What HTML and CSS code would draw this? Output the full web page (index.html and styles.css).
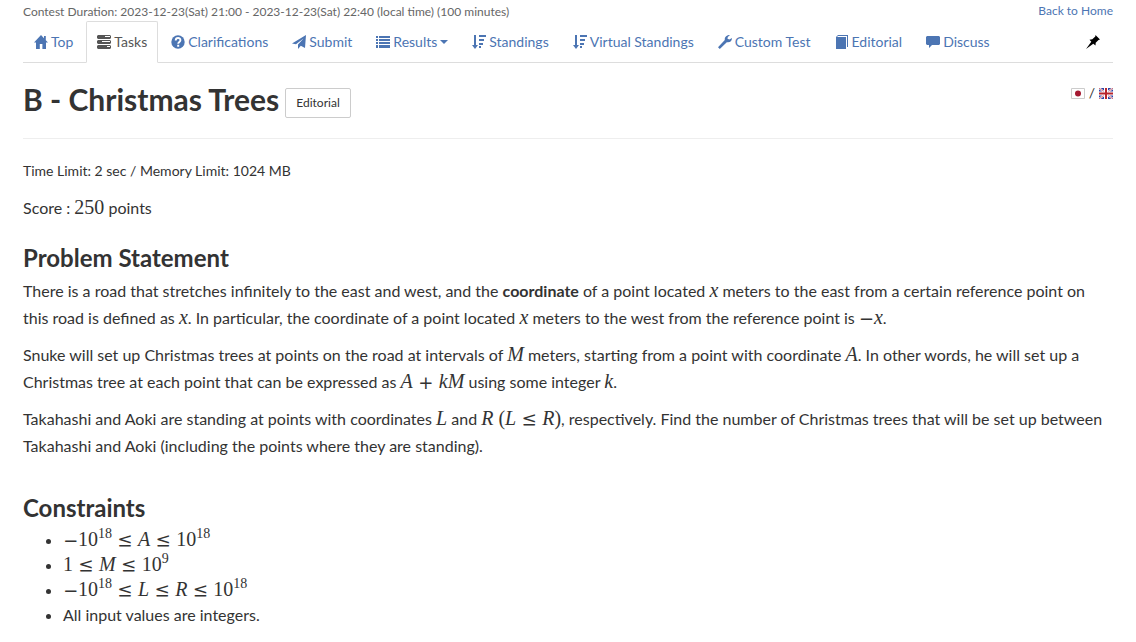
FILE: index.html
```html
<!DOCTYPE html>
<html lang="en">
<head>
<meta charset="utf-8">
<title>B - Christmas Trees</title>
<link rel="stylesheet" href="styles.css">
</head>
<body>
<main class="page">
  <header class="contest-bar">
    <small class="duration">Contest Duration: 2023-12-23(Sat) 21:00 - 2023-12-23(Sat) 22:40 (local time) (100 minutes)</small>
    <a class="home-link" href="#">Back to Home</a>
  </header>

  <nav class="tabs">
    <a class="tab" href="#"><svg class="icon" viewBox="0 0 14 14"><path d="M7 0 0 7.600h2V14h3.800V9h2.600v5H12V7.600h2L11.800 5.200V1H10v2.200z"/></svg>Top</a>
    <a class="tab active" href="#"><svg class="icon" viewBox="0 0 14 14"><path fill-rule="evenodd" d="M1 0h12l1 1v2l-1 1H1L0 3V1zM8 1v1h5V1zM1 5h12l1 1v2l-1 1H1L0 8V6zM5 6v1h8V6zM1 10h12l1 1v2l-1 1H1l-1-1v-2zM10 11v1h3v-1z"/></svg>Tasks</a>
    <a class="tab" href="#"><svg class="icon" viewBox="0 0 14 14"><circle cx="7" cy="7" r="6.700"/><path d="M4.700 5.400C4.700 2.300 9.500 2.300 9.400 5.200 9.400 6.900 7.200 6.900 7.200 8.700M6.200 10.700h2" fill="none" stroke="#fff" stroke-width="1.900"/></svg>Clarifications</a>
    <a class="tab" href="#"><svg class="icon" viewBox="0 0 14 14"><path d="M14 0 13 13 8.800 10.800 6 14V9.600L11.500 3.500 4 9.200 0 8.600z"/></svg>Submit</a>
    <a class="tab" href="#"><svg class="icon" viewBox="0 0 14 14"><path d="M0 1h2v2H0zm3 0h11v2H3zM0 4h2v2H0zm3 0h11v2H3zM0 7h2v2H0zm3 0h11v2H3zM0 10h2v3H0zm3 0h11v3H3z"/></svg>Results<span class="caret"></span></a>
    <a class="tab" href="#"><svg class="icon" viewBox="0 0 14 14"><path d="M2 0h2v10h2l-3 4-3-4h2zM7 0h7v2H7zm0 4h5v2H7zm0 4h4v2H7zm0 3h2v2H7z"/></svg>Standings</a>
    <a class="tab" href="#"><svg class="icon" viewBox="0 0 14 14"><path d="M2 0h2v10h2l-3 4-3-4h2zM7 0h7v2H7zm0 4h5v2H7zm0 4h4v2H7zm0 3h2v2H7z"/></svg>Virtual Standings</a>
    <a class="tab" href="#"><svg class="icon" viewBox="0 0 14 14"><path d="M12 0C9 0 6.400 1.800 6.800 5L0 12.200 1.800 14 8.800 7.200c3 .7 5.200-1.200 5.200-4.200l-2.600 1.600L9.500 3.800 9.800 2z"/></svg>Custom Test</a>
    <a class="tab" href="#"><svg class="icon" viewBox="0 0 14 14"><path d="M3 0h10v12h-1V1H3L2 2h9v12H1V2z"/></svg>Editorial</a>
    <a class="tab" href="#"><svg class="icon" viewBox="0 0 14 14"><path d="M1 1h12l1 1v7l-1 1H6l-3 3v-3H1L0 9V2z"/></svg>Discuss</a>
    <button class="pin" aria-label="Pin menu"><svg class="icon" viewBox="0 0 14 14"><path d="M9.500 0 14 4.500 12.500 4.900 9.700 7.700 9.500 10.500 7.300 8.700 0 14l5.300-7.300L3.500 4.700 6.300 4.300 9.300 1.500z"/></svg></button>
  </nav>

  <div class="title-row">
    <h1 class="title">B - Christmas Trees</h1>
    <a class="button" href="#">Editorial</a>
    <div class="languages">
      <a href="#" aria-label="Japanese"><svg class="flag" viewBox="0 0 14 11"><path fill="#fff" stroke="#ccc" d="M.5.5h13v10H.5z"/><circle cx="7" cy="5.500" r="3" fill="#a51931"/></svg></a>
      <span>/</span>
      <a href="#" aria-label="English"><svg class="flag" viewBox="0 0 14 11"><path fill="#2e42a5" d="M0 0h14v11H0z"/><path stroke="#fff" stroke-width="2" d="m0 0 14 11M14 0 0 11"/><path stroke="#b22234" stroke-width=".7" d="m0 0 14 11M14 0 0 11"/><path stroke="#fff" stroke-width="4" d="M7 0v11M0 5.500h14"/><path stroke="#b8252c" stroke-width="2" d="M7 0v11M0 5.500h14"/></svg></a>
    </div>
  </div>

  <p class="limits">Time Limit: 2 sec / Memory Limit: 1024 MB</p>

  <article class="statement">
    <p>Score : <span class="math">250</span> points</p>

    <section class="part">
      <h2>Problem Statement</h2>
      <p>There is a road that stretches infinitely to the east and west, and the <strong>coordinate</strong> of a point located <span class="math"><i>x</i></span> meters to the east from a certain reference point on this road is defined as <span class="math"><i>x</i></span>. In particular, the coordinate of a point located <span class="math"><i>x</i></span> meters to the west from the reference point is <span class="math"><span class="neg">−</span><i>x</i></span>.</p>
      <p>Snuke will set up Christmas trees at points on the road at intervals of <span class="math"><i>M</i></span> meters, starting from a point with coordinate <span class="math"><i>A</i></span>. In other words, he will set up a Christmas tree at each point that can be expressed as <span class="math"><i>A</i><span class="op">+</span><i>kM</i></span> using some integer <span class="math"><i>k</i></span>.</p>
      <p>Takahashi and Aoki are standing at points with coordinates <span class="math"><i>L</i></span> and <span class="math"><i>R</i> (<i>L</i><span class="op">≤</span><i>R</i>)</span>, respectively. Find the number of Christmas trees that will be set up between Takahashi and Aoki (including the points where they are standing).</p>
    </section>

    <section class="part">
      <h2>Constraints</h2>
      <ul>
        <li><span class="math"><span class="neg">−</span>10<sup>18</sup><span class="op">≤</span><i>A</i><span class="op">≤</span>10<sup>18</sup></span></li>
        <li><span class="math">1<span class="op">≤</span><i>M</i><span class="op">≤</span>10<sup>9</sup></span></li>
        <li><span class="math"><span class="neg">−</span>10<sup>18</sup><span class="op">≤</span><i>L</i><span class="op">≤</span><i>R</i><span class="op">≤</span>10<sup>18</sup></span></li>
        <li>All input values are integers.</li>
      </ul>
    </section>
  </article>
</main>
</body>
</html>
```
FILE: styles.css
```css
* { box-sizing: border-box; }
body {
  margin: 0;
  background: #fff;
  color: #333;
  font: 14px/20px Lato, sans-serif;
}
a { color: #4c75b3; text-decoration: none; }
.page { padding: 2px 23px 0; }
.contest-bar {
  display: flex;
  justify-content: space-between;
  font-size: 12px;
  line-height: 19px;
}
.duration { font-size: 12px; color: #666; }
.home-link { line-height: 18px; }
.tabs {
  display: flex;
  border-bottom: 1px solid #ddd;
}
.tab {
  display: flex;
  align-items: center;
  gap: 3px;
  margin: 0 2px -1px 0;
  padding: 10px;
  border: 1px solid transparent;
  border-radius: 2px 2px 0 0;
  white-space: nowrap;
}
.tab.active {
  border-color: #ddd #ddd #fff;
  background: #fff;
  color: #555;
}
.icon { width: 14px; height: 14px; fill: currentColor; }
.caret {
  border: 4px solid transparent;
  border-top-color: currentColor;
  border-bottom: 0;
}
.pin {
  display: flex;
  align-items: center;
  margin-left: auto;
  padding: 0 13px;
  border: 0;
  background: none;
  color: #000;
}
.title-row {
  display: flex;
  align-items: flex-start;
  gap: 6px;
  padding: 18px 0 20px;
  border-bottom: 1px solid #eee;
}
.title { margin: 0; font-size: 30px; line-height: 36px; font-weight: 700; }
.button {
  margin-top: 7px;
  padding: 5px 10px;
  border: 1px solid #ccc;
  border-radius: 2px;
  color: #333;
  font-size: 12px;
  line-height: 18px;
}
.languages {
  display: flex;
  align-items: center;
  gap: 4px;
  margin: 2px 0 0 auto;
}
.languages a { display: flex; }
.flag { width: 14px; height: 11px; }
.limits { margin: 22px 0 0; }
.statement { padding-top: 13px; font-size: 16px; line-height: 27px; }
.statement p { margin: 0 0 10px; }
.part { margin-top: 23px; }
.part + .part { margin-top: 35px; }
h2 { margin: 0 0 6px; font-size: 24px; line-height: 27px; font-weight: 700; }
.math { font: 20px/20px "Liberation Serif", serif; white-space: nowrap; }
.op, .neg {
  display: inline-block;
  font: 18px/20px "DejaVu Math TeX Gyre", "DejaVu Serif", serif;
  text-align: center;
}
.op { width: 26px; }
.neg { width: 15px; }
sup { font-size: 14px; line-height: 0; }
ul { margin: 0; padding-left: 40px; line-height: 25px; }
```
